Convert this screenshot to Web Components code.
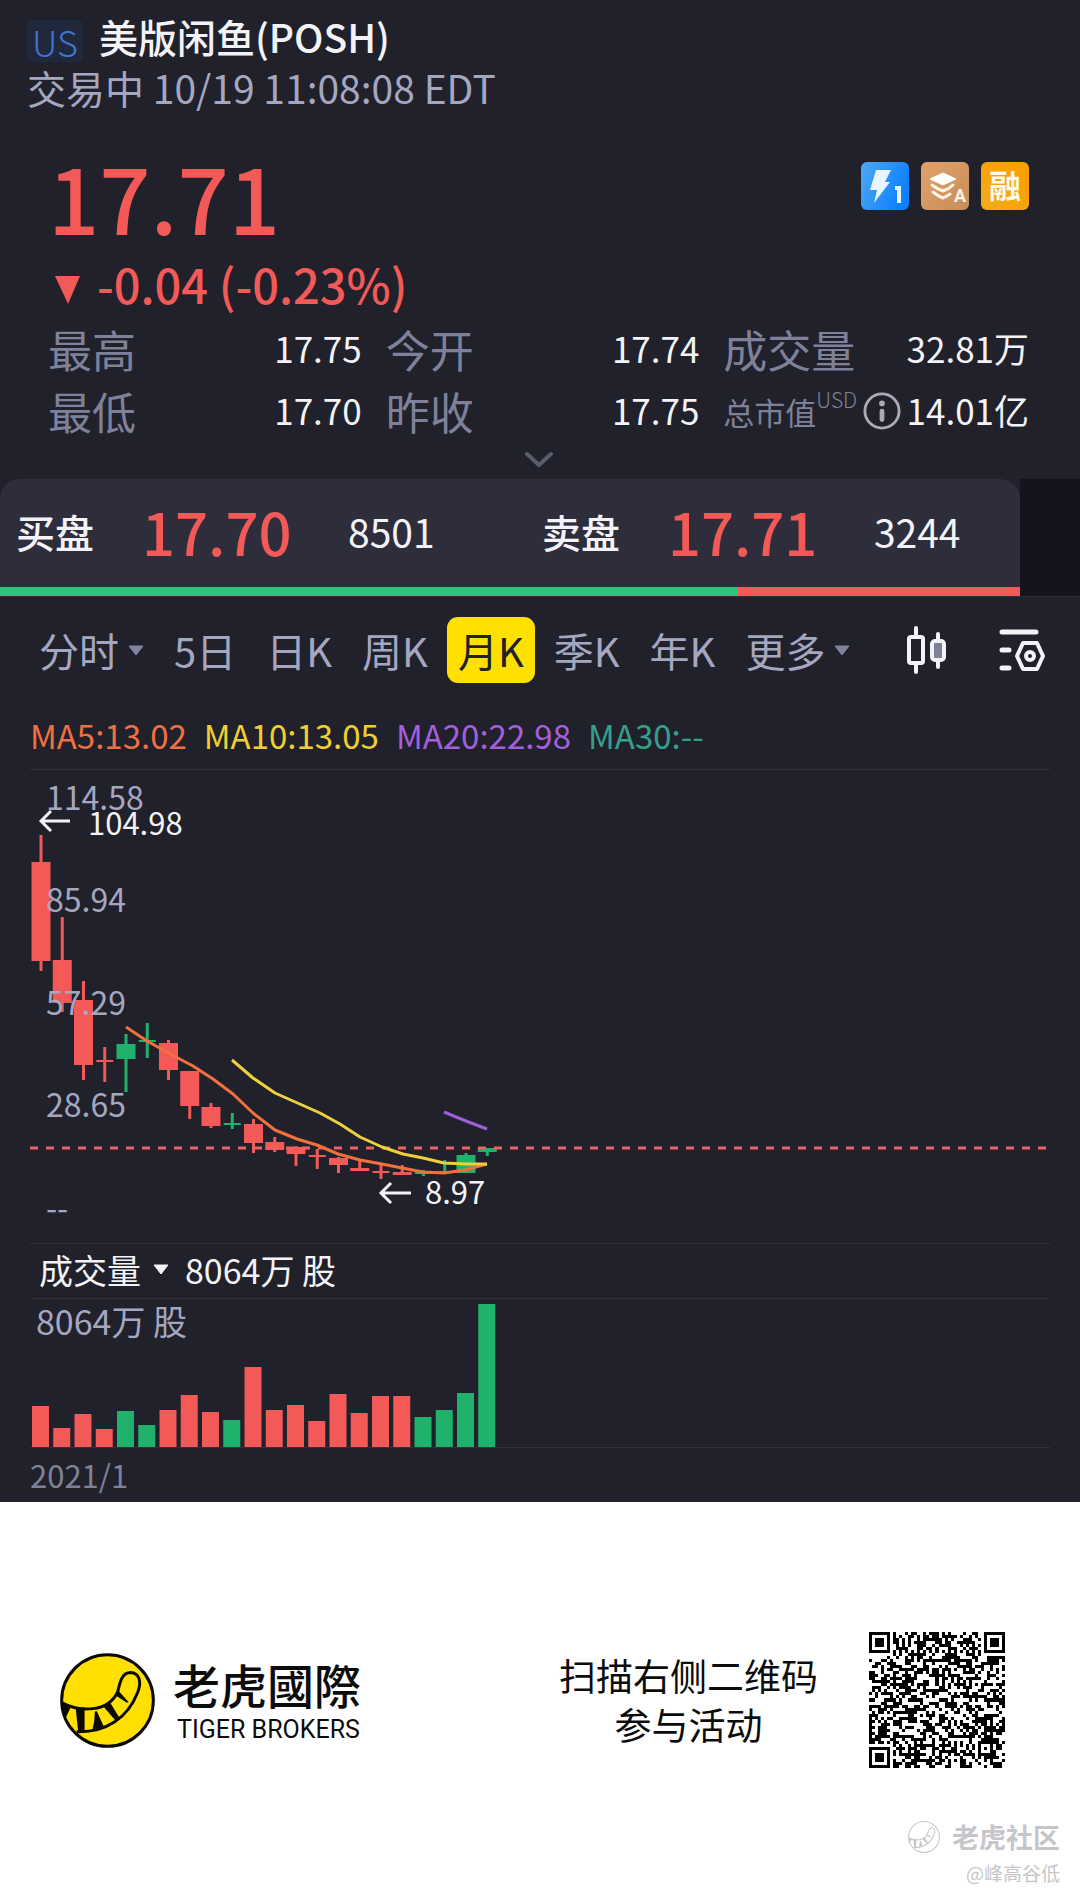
<!DOCTYPE html>
<html lang="zh-CN">
<head>
<meta charset="utf-8">
<meta name="viewport" content="width=device-width, initial-scale=1">
<title>美版闲鱼(POSH)</title>
<style>
    :root {
        --bg: #20212a;
        --panel: #2d2d3c;
        --line: #30313c;
        --text: #f3f3f7;
        --muted: #a5a7c1;
        --dim: #7f819b;
        --red: #f25957;
        --green: #20b26c;
        --yellow: #ffe000;
    }

    body {
        margin: 0;
        background: #fff;
        color: var(--text);
        font-family: "Noto Sans CJK SC", "Noto Sans", sans-serif;
    }
</style>
</head>
<body>
<stock-page></stock-page>

<script>
class StockHeader extends HTMLElement {
    constructor() {
        super();
        this.attachShadow({ mode: "open" });
    }

    connectedCallback() {
        this.shadowRoot.innerHTML = `
        <style>
            :host {
                display: block;
                padding: 10px 27px 0;
            }

            .title {
                display: flex;
                align-items: center;
                gap: 16px;
                height: 52px;
            }

            .market {
                margin-top: 10px;
                padding: 0 5px;
                border-radius: 5px;
                background: #20283b;
                color: #4373d6;
                font-size: 36px;
                font-weight: 300;
                line-height: 42px;
            }

            h1 {
                margin: 0;
                font-size: 39px;
                font-weight: 500;
                line-height: 50px;
            }

            p {
                margin: 0;
                color: var(--muted);
                font-size: 39px;
                line-height: 50px;
            }
        </style>
        <div class="title">
            <span class="market">${this.getAttribute("market")}</span>
            <h1><slot></slot></h1>
        </div>
        <p><slot name="status"></slot></p>
        `;
    }
}

class QuoteStat extends HTMLElement {
    constructor() {
        super();
        this.attachShadow({ mode: "open" });
    }

    connectedCallback() {
        this.shadowRoot.innerHTML = `
        <style>
            :host {
                display: flex;
                align-items: center;
                justify-content: space-between;
                height: 62px;
                white-space: nowrap;
            }

            .label {
                display: flex;
                align-items: center;
                color: var(--dim);
                font-size: 44px;
            }

            :host([small]) .label {
                font-size: 31px;
            }

            .value {
                padding-bottom: 4px;
                font-size: 35px;
            }
        </style>
        <span class="label"><slot></slot></span>
        <span class="value">${this.getAttribute("value")}</span>
        `;
    }
}

class QuotePanel extends HTMLElement {
    constructor() {
        super();
        this.attachShadow({ mode: "open" });
    }

    connectedCallback() {
        this.shadowRoot.innerHTML = `
        <style>
            :host {
                display: block;
                padding: 34px 51px 0 48px;
            }

            .top {
                display: flex;
                justify-content: space-between;
                padding-top: 16px;
            }

            .price {
                height: 96px;
                color: var(--red);
                font-size: 90px;
                font-weight: 500;
                line-height: 68px;
            }

            .badges {
                display: flex;
                gap: 12px;
            }

            .badges svg {
                width: 48px;
                height: 48px;
            }

            .change {
                display: flex;
                align-items: baseline;
                gap: 17px;
                height: 52px;
                padding-left: 7px;
                color: var(--red);
                font-size: 47px;
                font-weight: 500;
                line-height: 52px;
            }

            .stats {
                display: grid;
                grid-template-columns: 314fr 314fr 306fr;
                column-gap: 24px;
                padding-top: 8px;
            }

            sup {
                align-self: flex-start;
                font-size: 21px;
                font-weight: 300;
                line-height: 20px;
            }

            .tip, .more {
                display: block;
                padding: 0;
                border: 0;
                background: none;
            }

            .tip {
                height: 38px;
                margin-left: 6px;
            }

            .more {
                height: 37px;
                margin: 0 auto;
            }
        </style>
        <div class="top">
            <div class="price">17.71</div>
            <div class="badges">
                <svg viewBox="0 0 48 48">
                    <defs>
                        <linearGradient id="blue" x1="0" y1="0" x2="1" y2="0.4">
                            <stop offset="0" stop-color="#4da9f2"/><stop offset="1" stop-color="#0f80ff"/>
                        </linearGradient>
                    </defs>
                    <rect width="48" height="48" rx="6" fill="url(#blue)"/>
                    <path d="M15 8H30L24 20H29L13 41L16 28H9Z" fill="#e9f6ff"/>
                    <path d="M34 26H38V41" fill="none" stroke="#e9f6ff" stroke-width="4"/>
                </svg>
                <svg viewBox="0 0 48 48">
                    <defs>
                        <linearGradient id="bronze" x1="0" y1="0" x2="1" y2="1">
                            <stop offset="0" stop-color="#e2a268"/><stop offset="1" stop-color="#c58e5c"/>
                        </linearGradient>
                    </defs>
                    <rect width="48" height="48" rx="6" fill="url(#bronze)"/>
                    <path d="M22 11L35 17L22 23L9 17Z" fill="#fff" stroke="#fff" stroke-width="1" stroke-linejoin="round"/>
                    <path d="M11 23Q16 27 22 29Q28 27 32 23M12 30Q17 34 22 36Q26 34 29 32" fill="none" stroke="#fff3e6" stroke-width="3" stroke-linecap="round"/>
                    <text x="33" y="40" fill="#fff3e6" font-family="Roboto, sans-serif" font-size="18" font-weight="700">A</text>
                </svg>
                <svg viewBox="0 0 48 48">
                    <defs>
                        <linearGradient id="gold" x1="0" y1="1" x2="1" y2="0">
                            <stop offset="0" stop-color="#f1ac18"/><stop offset="1" stop-color="#ff9c00"/>
                        </linearGradient>
                    </defs>
                    <rect width="48" height="48" rx="6" fill="url(#gold)"/>
                    <text x="24" y="36" fill="#fffbe8" text-anchor="middle" font-size="32" font-weight="700">融</text>
                </svg>
            </div>
        </div>
        <div class="change">
            <svg width="25" height="28" viewBox="0 0 25 28"><path d="M0 0H25L13 28Z" fill="#f25957"/></svg>
            <span>-0.04 (-0.23%)</span>
        </div>
        <div class="stats">
            <quote-stat value="17.75">最高</quote-stat>
            <quote-stat value="17.74">今开</quote-stat>
            <quote-stat value="32.81万">成交量</quote-stat>
            <quote-stat value="17.70">最低</quote-stat>
            <quote-stat value="17.75">昨收</quote-stat>
            <quote-stat value="14.01亿" small>总市值<sup>USD</sup><button class="tip" aria-label="总市值说明"><svg width="38" height="38" viewBox="0 0 40 40">
                <circle cx="20" cy="20" r="18" fill="none" stroke="#a9aab6" stroke-width="3"/>
                <circle cx="20" cy="12" r="3" fill="#a9aab6"/>
                <path d="M20 20V29" stroke="#a9aab6" stroke-width="5" stroke-linecap="round"/>
            </svg></button></quote-stat>
        </div>
        <button class="more" aria-label="展开"><svg width="32" height="18" viewBox="0 0 32 18">
            <path d="M4 4L16 15L28 4" fill="none" stroke="#5c5d6c" stroke-width="4" stroke-linecap="round" stroke-linejoin="round"/>
        </svg></button>
        `;
    }
}

class BookSide extends HTMLElement {
    constructor() {
        super();
        this.attachShadow({ mode: "open" });
    }

    connectedCallback() {
        this.shadowRoot.innerHTML = `
        <style>
            :host {
                display: grid;
                grid-template-columns: 126px 206px 1fr;
                align-items: center;
                font-size: 39px;
                white-space: nowrap;
            }

            .name {
                font-weight: 500;
            }

            .price {
                color: var(--red);
                font-size: 58px;
                font-weight: 500;
            }
        </style>
        <span class="name"><slot></slot></span>
        <span class="price">${this.getAttribute("price")}</span>
        <span>${this.getAttribute("size")}</span>
        `;
    }
}

class OrderBook extends HTMLElement {
    constructor() {
        super();
        this.attachShadow({ mode: "open" });
    }

    connectedCallback() {
        this.shadowRoot.innerHTML = `
        <style>
            :host {
                display: block;
                padding-right: 60px;
                border-bottom: 1px solid var(--line);
                background: linear-gradient(90deg, var(--bg) 0 calc(100% - 60px), #14141c calc(100% - 60px));
            }

            .book {
                overflow: hidden;
                border-radius: 20px 20px 0 0;
                background: var(--panel);
            }

            .sides {
                display: grid;
                grid-template-columns: 11fr 10fr;
                height: 104px;
                padding: 0 0 4px 16px;
            }

            .ratio {
                display: flex;
                height: 9px;
            }

            .buy {
                flex: 8501;
                background: #2ac67c;
            }

            .sell {
                flex: 3244;
                background: var(--red);
            }
        </style>
        <div class="book">
            <div class="sides">
                <book-side price="17.70" size="8501">买盘</book-side>
                <book-side price="17.71" size="3244">卖盘</book-side>
            </div>
            <div class="ratio"><div class="buy"></div><div class="sell"></div></div>
        </div>
        `;
    }
}

class PeriodTabs extends HTMLElement {
    constructor() {
        super();
        this.attachShadow({ mode: "open" });
    }

    connectedCallback() {
        const tabs = ["分时", "5日", "日K", "周K", "月K", "季K", "年K", "更多"];
        const caret = `<svg width="16" height="11" viewBox="0 0 16 11"><path d="M1 1H15L8 10Z" fill="#8183a0" stroke="#8183a0" stroke-linejoin="round"/></svg>`;

        this.shadowRoot.innerHTML = `
        <style>
            :host {
                display: flex;
                align-items: center;
                gap: 8px;
                padding: 20px 34px 0 28px;
            }

            button {
                display: flex;
                align-items: center;
                gap: 9px;
                height: 66px;
                padding: 0 11px;
                border: 0;
                border-radius: 11px;
                background: none;
                color: var(--muted);
                font: inherit;
                font-size: 40px;
                line-height: 64px;
                white-space: nowrap;
            }

            button[aria-pressed="true"] {
                background: var(--yellow);
                color: #20212a;
            }

            .tools {
                display: flex;
                gap: 50px;
                margin-left: auto;
            }

            .tools button {
                padding: 0;
            }
        </style>
        ${tabs.map(t => `<button aria-pressed="${t === "月K"}">${t}${t === "分时" || t === "更多" ? caret : ""}</button>`).join("")}
        <div class="tools">
            <button aria-label="图表类型"><svg width="42" height="50" viewBox="0 0 42 50" fill="none" stroke="#f3f3f7" stroke-width="4" stroke-linecap="round">
                <rect x="3" y="12" width="14" height="26" rx="2"/>
                <path d="M10 3V12M10 38V47M32 9V15M32 36V42"/>
                <rect x="26" y="16" width="12" height="19" rx="3" fill="#7f819b"/>
            </svg></button>
            <button aria-label="指标设置"><svg width="48" height="46" viewBox="0 0 48 46" fill="none" stroke="#f3f3f7" stroke-width="5" stroke-linecap="round" stroke-linejoin="round">
                <path d="M4 5H38M4 23H11M4 41H11"/>
                <path d="M25 16H39L45 29L39 42H25L19 29Z" stroke-width="4"/>
                <circle cx="32" cy="29" r="4" stroke-width="4"/>
            </svg></button>
        </div>
        `;
    }
}

class KlineChart extends HTMLElement {
    constructor() {
        super();
        this.attachShadow({ mode: "open" });
    }

    // high, body top, body bottom, low, rising
    static candles = [
        [65, 92, 191, 201, 0], [147, 190, 233, 242, 0], [211, 230, 295, 310, 0], [277, 290, 292, 312, 0],
        [264, 274, 289, 322, 1], [253, 270, 272, 288, 1], [270, 273, 300, 310, 0], [301, 301, 336, 349, 0],
        [333, 337, 356, 358, 0], [343, 353, 355, 359, 1], [349, 354, 373, 383, 0], [367, 372, 380, 382, 0],
        [376, 377, 384, 396, 0], [379, 385, 387, 399, 0], [387, 388, 395, 403, 0], [391, 398, 401, 401, 0],
        [394, 401, 403, 409, 0], [395, 402, 405, 405, 0], [400, 402, 404, 406, 1], [390, 401, 403, 403, 1],
        [383, 385, 403, 403, 1], [378, 378, 382, 386, 1]
    ];

    connectedCallback() {
        const candles = KlineChart.candles.map(([high, top, bottom, low, up], i) => {
            const x = 11 + i * 21.25;
            const color = up ? "#20b26c" : "#f25957";
            const half = bottom - top < 3 ? 8.5 : 9.5;
            return `<path d="M${x} ${high}V${low}" stroke="${color}" stroke-width="3"/>
                <rect x="${x - half}" y="${top}" width="${half * 2}" height="${bottom - top}" fill="${color}"/>`;
        }).join("");

        const axis = [["114.58", 40], ["85.94", 142], ["57.29", 245], ["28.65", 347], ["--", 450]]
            .map(([label, y]) => `<text x="16" y="${y}">${label}</text>`).join("");

        this.shadowRoot.innerHTML = `
        <style>
            :host {
                display: block;
                padding: 28px 30px 0;
            }

            .averages {
                display: flex;
                gap: 17px;
                height: 58px;
                font-size: 33px;
                line-height: 48px;
                white-space: nowrap;
            }

            .plot {
                border-top: 1px solid var(--line);
            }

            svg {
                display: block;
                width: 100%;
            }

            .axis {
                fill: var(--muted);
                font-size: 32px;
            }

            .marks {
                fill: var(--text);
                font-size: 31px;
            }
        </style>
        <div class="averages">
            <span style="color: #f07040">MA5:13.02</span>
            <span style="color: #f0d030">MA10:13.05</span>
            <span style="color: #a45fdc">MA20:22.98</span>
            <span style="color: #34a08c">MA30:--</span>
        </div>
        <div class="plot">
            <svg viewBox="0 0 1020 473">
                ${candles}
                <path d="M0 378H1018" stroke="#ef6260" stroke-width="3" stroke-dasharray="8 8"/>
                <g fill="none" stroke-width="3" stroke-linejoin="round">
                    <path stroke="#f3703c" d="M96 257L117 271L146 287L163 296L183 309L203 324L223 343L245 360L267 369L287 375L308 384L330 390L352 394L372 398L393 402L414 403L435 400L457 394"/>
                    <path stroke="#efcf3c" d="M202 290L223 308L245 323L290 343L310 354L330 367L352 377L373 384L393 388L414 393L436 394L457 394"/>
                    <path stroke="#a05fd8" d="M414 342L436 351L457 359"/>
                </g>
                <g class="axis">${axis}</g>
                <g class="marks">
                    <text x="58" y="65">104.98</text>
                    <text x="395" y="434">8.97</text>
                </g>
                <path d="M40 51H11M21 41L11 51L21 61M381 423H351M361 413L351 423L361 433" fill="none" stroke="#f3f3f7" stroke-width="3"/>
            </svg>
        </div>
        `;
    }
}

class VolumeChart extends HTMLElement {
    constructor() {
        super();
        this.attachShadow({ mode: "open" });
    }

    connectedCallback() {
        const heights = [41, 19, 33, 18, 36, 22, 37, 52, 35, 27, 80, 37, 42, 26, 53, 34, 51, 51, 30, 37, 54, 143];
        const rising = [4, 5, 9, 18, 19, 20, 21];
        const bars = heights.map((h, i) =>
            `<rect x="${2 + i * 21.25}" y="${148 - h}" width="17" height="${h}" fill="${rising.includes(i) ? "#20b26c" : "#f25957"}"/>`
        ).join("");

        this.shadowRoot.innerHTML = `
        <style>
            :host {
                display: block;
                padding: 0 30px;
            }

            .head {
                display: flex;
                align-items: center;
                height: 50px;
                padding: 0 0 4px 9px;
                border: solid var(--line);
                border-width: 1px 0;
                font-size: 34px;
            }

            button {
                display: flex;
                align-items: center;
                gap: 12px;
                margin-right: 16px;
                padding: 0;
                border: 0;
                background: none;
                color: inherit;
                font: inherit;
            }

            .plot {
                display: block;
                width: 100%;
                overflow: visible;
                border-bottom: 1px solid var(--line);
            }

            time {
                display: block;
                height: 54px;
                color: var(--dim);
                font-size: 31px;
                line-height: 54px;
            }
        </style>
        <div class="head">
            <button>成交量<svg width="16" height="11" viewBox="0 0 16 11"><path d="M1 1H15L8 10Z" fill="#f3f3f7" stroke="#f3f3f7" stroke-linejoin="round"/></svg></button>
            <span>8064万 股</span>
        </div>
        <svg class="plot" viewBox="0 0 1020 148">
            ${bars}
            <text x="6" y="36" font-size="34" fill="#a5a7c1">8064万 股</text>
        </svg>
        <time datetime="2021-01">2021/1</time>
        `;
    }
}

class TigerMark extends HTMLElement {
    constructor() {
        super();
        this.attachShadow({ mode: "open" });
    }

    connectedCallback() {
        this.shadowRoot.innerHTML = `
        <style>
            :host {
                display: block;
                --fill: #ffe000;
                --ink: #0b0a06;
            }

            :host([plain]) {
                --fill: #fff;
                --ink: #c6c6ca;
            }

            svg {
                display: block;
                width: 100%;
            }

            .stripes {
                fill: var(--ink);
            }

            .outline {
                fill: none;
                stroke: var(--ink);
                stroke-width: 9;
            }
        </style>
        <svg viewBox="0 0 286 286">
            <circle cx="143" cy="143" r="138" style="fill: var(--fill)"/>
            <path class="outline" d="M6 150C60 178 145 180 174 116C180 92 185 59 212 59C240 60 246 88 234 118C204 196 138 240 50 237"/>
            <path class="stripes" d="M5 148L33 162L17 196ZM47 164H74V237L55 239ZM105 176L111 175L132 222L98 230L103 205ZM128 158L149 146L181 199L170 207ZM167 127L178 116L207 148L200 149Z"/>
            <circle class="outline" cx="143" cy="143" r="138"/>
        </svg>
        `;
    }
}

class QrCode extends HTMLElement {
    constructor() {
        super();
        this.attachShadow({ mode: "open" });
    }

    // concentric squares: finder corners and the alignment mark
    ring(dx, dy, size) {
        const d = Math.max(Math.abs(dx), Math.abs(dy));
        return size === 7 ? d !== 2 && d !== 4 : d !== 1;
    }

    module(x, y, n) {
        for (const [cx, cy] of [[3, 3], [n - 4, 3], [3, n - 4]]) {
            if (Math.abs(x - cx) < 5 && Math.abs(y - cy) < 5) return this.ring(x - cx, y - cy, 7);
        }
        if (Math.abs(x - n + 7) < 3 && Math.abs(y - n + 7) < 3) return this.ring(x - n + 7, y - n + 7, 5);
        if (x === 6 || y === 6) return (x + y) % 2 === 0;
        this.seed = (this.seed * 1103515245 + 12345) % 2147483648;
        return this.seed / 2147483648 > 0.48;
    }

    connectedCallback() {
        const n = 45;
        this.seed = 1019;
        let d = "";
        for (let y = 0; y < n; y++) {
            for (let x = 0; x < n; x++) {
                if (this.module(x, y, n)) d += `M${x} ${y}h1v1h-1z`;
            }
        }

        this.shadowRoot.innerHTML = `
        <style>
            :host {
                display: block;
            }

            svg {
                display: block;
                width: 100%;
            }
        </style>
        <svg viewBox="0 0 ${n} ${n}" role="img" aria-label="二维码" shape-rendering="crispEdges"><path d="${d}"/></svg>
        `;
    }
}

class BrandFooter extends HTMLElement {
    constructor() {
        super();
        this.attachShadow({ mode: "open" });
    }

    connectedCallback() {
        this.shadowRoot.innerHTML = `
        <style>
            :host {
                display: block;
                padding: 130px 20px 10px 60px;
                background: #fff;
                color: #0c0c0c;
            }

            .row {
                display: flex;
                align-items: center;
                padding-right: 55px;
            }

            .logo {
                width: 95px;
            }

            .name {
                margin-left: 18px;
                padding-top: 6px;
                font-size: 47px;
                font-weight: 500;
                line-height: 48px;
            }

            .name small {
                display: block;
                padding: 6px 0 0 4px;
                font-family: Roboto, sans-serif;
                font-size: 25px;
                font-weight: 400;
                line-height: 32px;
            }

            .scan {
                margin: 0 51px 0 auto;
                font-size: 37px;
                line-height: 49px;
                text-align: center;
            }

            qr-code {
                width: 136px;
            }

            .community {
                display: flex;
                flex-direction: column;
                align-items: flex-end;
                padding-top: 48px;
                color: #c6c6ca;
                font-size: 19px;
                line-height: 30px;
            }

            .community div {
                display: flex;
                align-items: center;
                gap: 12px;
                height: 42px;
                font-size: 27px;
                font-weight: 700;
            }

            .community tiger-mark {
                width: 32px;
            }
        </style>
        <div class="row">
            <tiger-mark class="logo"></tiger-mark>
            <div class="name">老虎國際<small>TIGER BROKERS</small></div>
            <div class="scan">扫描右侧二维码<br>参与活动</div>
            <qr-code></qr-code>
        </div>
        <div class="community">
            <div><tiger-mark plain></tiger-mark>老虎社区</div>
            <span>@峰高谷低</span>
        </div>
        `;
    }
}

class StockPage extends HTMLElement {
    constructor() {
        super();
        this.attachShadow({ mode: "open" });
    }

    connectedCallback() {
        this.shadowRoot.innerHTML = `
        <style>
            :host {
                display: block;
            }

            main {
                background: var(--bg);
            }
        </style>
        <main>
            <stock-header market="US">美版闲鱼(POSH)<span slot="status">交易中 10/19 11:08:08 EDT</span></stock-header>
            <quote-panel></quote-panel>
            <order-book></order-book>
            <period-tabs></period-tabs>
            <kline-chart></kline-chart>
            <volume-chart></volume-chart>
        </main>
        <brand-footer></brand-footer>
        `;
    }
}

customElements.define("stock-header", StockHeader);
customElements.define("quote-stat", QuoteStat);
customElements.define("quote-panel", QuotePanel);
customElements.define("book-side", BookSide);
customElements.define("order-book", OrderBook);
customElements.define("period-tabs", PeriodTabs);
customElements.define("kline-chart", KlineChart);
customElements.define("volume-chart", VolumeChart);
customElements.define("tiger-mark", TigerMark);
customElements.define("qr-code", QrCode);
customElements.define("brand-footer", BrandFooter);
customElements.define("stock-page", StockPage);
</script>
</body>
</html>
